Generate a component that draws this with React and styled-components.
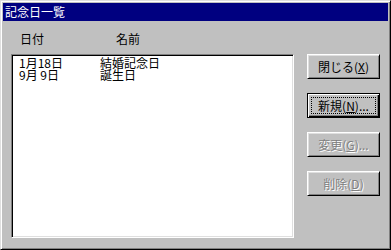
import styled, { createGlobalStyle } from "styled-components";

const GlobalStyle = createGlobalStyle`
  html, body {
    margin: 0;
    padding: 0;
    background: #c0c0c0;
  }
  body {
    font-family: "Noto Sans CJK JP", "DejaVu Sans", sans-serif;
    font-size: 12px;
  }
`

const Window = styled.div`
  box-sizing: border-box;
  width: 391px;
  height: 250px;
  padding: 1px;
  background: #c0c0c0;
  border: 1px solid;
  border-color: #dfdfdf #000 #000 #dfdfdf;
  box-shadow: inset 1px 1px #fff, inset -1px -1px #808080;
  display: flex;
  flex-direction: column;
`

const TitleBar = styled.div`
  height: 18px;
  margin: 1px 1px 0 1px;
  background: #000080;
  color: #fff;
  display: flex;
  align-items: center;
  padding-left: 2px;
  font-size: 12px;
  line-height: 12px;
`

const Body = styled.div`
  display: flex;
  padding: 0 0 0 9px;
  gap: 13px;
`

const ListColumn = styled.div`
  display: flex;
  flex-direction: column;
  width: 283px;
`

const HeaderRow = styled.div`
  display: flex;
  height: 12px;
  line-height: 12px;
  margin: 12px 0 9px 0;
  color: #000;
`

const HeaderCell = styled.span`
  box-sizing: border-box;
  width: ${p => p.$w}px;
  flex: none;
  padding-left: ${p => p.$pad || 0}px;
`

const ListBox = styled.div`
  box-sizing: border-box;
  height: 184px;
  background: #fff;
  border: 1px solid;
  border-color: #808080 #fff #fff #808080;
  box-shadow: inset 1px 1px #000, inset -1px -1px #dfdfdf;
  padding: 2px 0 0 7px;
`

const Row = styled.div`
  display: flex;
  height: 12px;
  line-height: 12px;
  color: #000;
`

const Cell = styled.span`
  width: ${p => p.$w}px;
  flex: none;
  white-space: pre;
`

const ButtonColumn = styled.div`
  display: flex;
  flex-direction: column;
  gap: 14px;
  margin-top: 33px;
`

const Button = styled.button`
  box-sizing: border-box;
  width: 73px;
  height: 25px;
  padding: ${p => (p.$default ? "3px" : "0")};
  margin: 0;
  display: flex;
  align-items: stretch;
  justify-content: center;
  background: #c0c0c0;
  font-family: inherit;
  font-size: 12px;
  color: ${p => (p.disabled ? "#808080" : "#000")};
  text-shadow: ${p => (p.disabled ? "1px 1px 0 #fff" : "none")};
  border: 1px solid;
  border-color: ${p => (p.$default ? "#000" : "#fff #000 #000 #fff")};
  box-shadow: ${p =>
    p.$default
      ? "inset 1px 1px #fff, inset -1px -1px #000, inset -2px -2px #808080"
      : "inset 1px 1px #dfdfdf, inset -1px -1px #808080"};
`

const Label = styled.span`
  flex: 1;
  display: flex;
  align-items: center;
  justify-content: center;
  border: 1px ${p => (p.$focus ? "dotted #000" : "solid transparent")};
  line-height: 12px;
`

const Key = styled.u`
  text-decoration: underline;
`

const anniversaries = [
  { date: "1月18日", name: "結婚記念日" },
  { date: "9月 9日", name: "誕生日" },
]

function App() {
  return (
    <>
      <GlobalStyle />
      <Window>
        <TitleBar>記念日一覧</TitleBar>
        <Body>
          <ListColumn>
            <HeaderRow>
              <HeaderCell $w={105} $pad={9}>日付</HeaderCell>
              <HeaderCell $w={100}>名前</HeaderCell>
            </HeaderRow>
            <ListBox>
              {anniversaries.map(a => (
                <Row key={a.date}>
                  <Cell $w={81}>{a.date}</Cell>
                  <Cell $w={150}>{a.name}</Cell>
                </Row>
              ))}
            </ListBox>
          </ListColumn>
          <ButtonColumn>
            <Button><Label>閉じる(<Key>X</Key>)</Label></Button>
            <Button $default><Label $focus>新規(<Key>N</Key>)...</Label></Button>
            <Button disabled><Label>変更(<Key>G</Key>)...</Label></Button>
            <Button disabled><Label>削除(<Key>D</Key>)</Label></Button>
          </ButtonColumn>
        </Body>
      </Window>
    </>
  );
}

export default App;
